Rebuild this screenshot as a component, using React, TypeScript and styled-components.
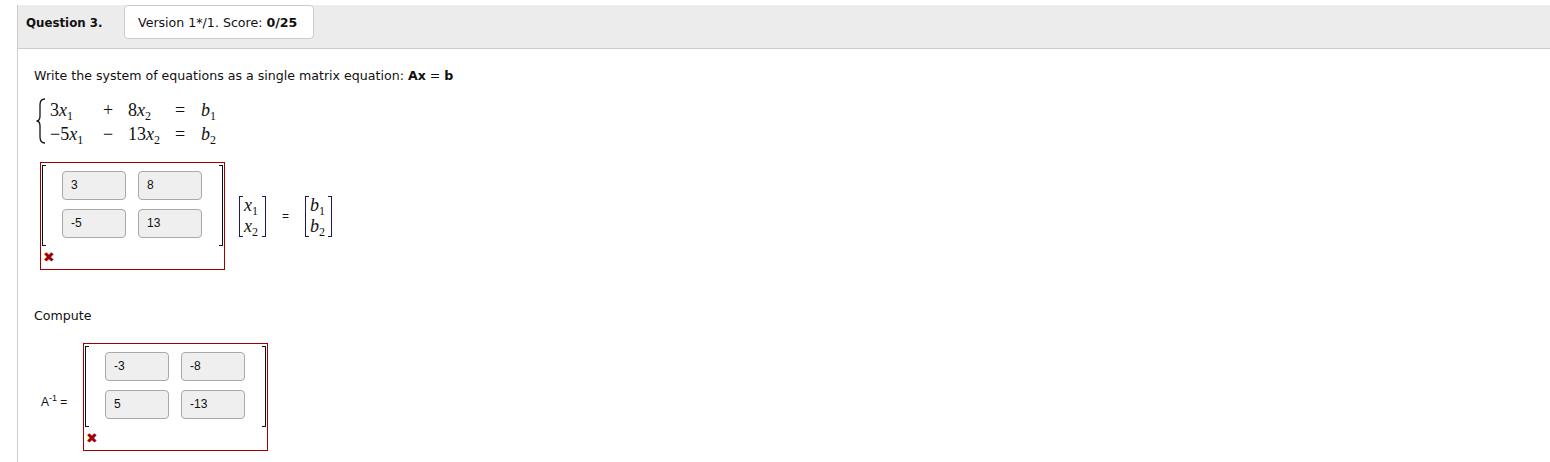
import React from 'react'
import styled, { createGlobalStyle } from 'styled-components'

const GlobalStyle = createGlobalStyle`
  body {
    margin: 0;
    background: #fff;
    font-family: "DejaVu Sans", sans-serif;
    font-size: 12.6px;
    color: #111;
  }
`

const Panel = styled.div`
  margin: 5px 0 0 17px;
  border-left: 1px solid #ccc;
  min-height: 457px;
`
const Header = styled.div`
  display: flex;
  align-items: flex-start;
  height: 43px;
  background: #ececec;
  border-bottom: 1px solid #ccc;
  padding-left: 8px;
`
const QuestionLabel = styled.div`
  font-weight: bold;
  font-size: 11.8px;
  margin-top: 11px;
  width: 98px;
`
const VersionBox = styled.div`
  height: 32px;
  line-height: 33px;
  padding: 0 16px 0 13px;
  background: #fff;
  border: 1px solid #ccc;
  border-radius: 4px;
`
const Body = styled.div`
  padding: 19px 16px 0 16px;
`
const Prompt = styled.div`
  line-height: 16px;
  margin-bottom: 12px;
`
const SystemRow = styled.div`
  display: flex;
  align-items: center;
  margin-left: 1px;
`
const EqGrid = styled.div`
  display: grid;
  grid-template-columns: 53px 25px 47px 26px 30px;
  font-family: "Liberation Serif", serif;
  font-size: 18px;
  line-height: 24px;
  margin-top: 2px;
`
const Cell = styled.span`
  white-space: nowrap;
`
const V = styled.i`
  font-style: italic;
`
const Sub = styled.sub`
  font-size: 12px;
  vertical-align: -4px;
  line-height: 0;
`
const Answer = styled.div`
  display: flex;
  align-items: center;
  margin: 16px 0 0 6px;
`
const ErrorBox = styled.div`
  flex: none;
  border: 1px solid #a10000;
  padding: 2px 1px 5px 1px;
  width: 181px;
`
const MatrixRow = styled.div`
  display: flex;
  align-items: stretch;
  height: 81px;
`
const Bracket = styled.div<{ $side: 'left' | 'right'; $color?: string }>`
  width: 3px;
  flex: none;
  border: 1px solid ${(p) => p.$color || '#111'};
  ${(p) => (p.$side === 'left' ? 'border-right: none;' : 'border-left: none;')}
`
const InputGrid = styled.div`
  flex: 1;
  display: grid;
  grid-template-columns: 64px 64px;
  column-gap: 12px;
  row-gap: 9px;
  padding: 6px 0 0 16px;
  align-content: start;
`
const NumInput = styled.div`
  height: 29px;
  box-sizing: border-box;
  background: #efefef;
  border: 1px solid #a9a9a9;
  border-radius: 4px;
  padding: 0 8px;
  line-height: 27px;
  font-family: "Liberation Sans", Arial, sans-serif;
  font-size: 12px;
  color: #111;
`
const Cross = styled.div`
  color: #a10000;
  font-family: "DejaVu Sans", sans-serif;
  font-size: 14px;
  line-height: 13px;
  height: 13px;
  margin: 5px 0 0 1px;
`
const Vector = styled.div<{ $gap: number }>`
  display: flex;
  align-items: stretch;
  height: 41px;
  width: 27px;
  margin-left: ${(p) => p.$gap}px;
`
const VectorBody = styled.div`
  flex: 1;
  display: flex;
  flex-direction: column;
  justify-content: space-around;
  padding: 0 1px;
  font-family: "Liberation Serif", serif;
  font-size: 18px;
  line-height: 19px;
`
const Equals = styled.span`
  width: 39px;
  text-align: center;
  font-family: "Liberation Sans", Arial, sans-serif;
  font-size: 12px;
`
const Compute = styled.div`
  margin-top: 38px;
  margin-bottom: 20px;
`
const InverseRow = styled.div`
  display: flex;
  align-items: center;
  margin-left: 7px;
`
const InverseLabel = styled.div`
  font-family: "Liberation Sans", Arial, sans-serif;
  font-size: 12px;
  width: 42px;
  margin-top: 8px;
  sup {
    font-size: 9px;
  }
`

const Brace = () => (
  <svg width="12" height="46" viewBox="0 0 12 46" style={{ marginRight: 3 }}>
    <path
      d="M10 1 C6 1 5 3 5 7 L5 18 C5 21 4 23 1.5 23 C4 23 5 25 5 28 L5 39 C5 43 6 45 10 45"
      fill="none"
      stroke="#111"
      strokeWidth="1.3"
    />
  </svg>
)

const Matrix = ({ values }: { values: string[] }) => (
  <ErrorBox>
    <MatrixRow>
      <Bracket $side="left" />
      <InputGrid>
        {values.map((v, i) => (
          <NumInput key={i}>{v}</NumInput>
        ))}
      </InputGrid>
      <Bracket $side="right" />
    </MatrixRow>
    <Cross>✖</Cross>
  </ErrorBox>
)

const VarVector = ({ name, gap }: { name: string; gap: number }) => (
  <Vector $gap={gap}>
    <Bracket $side="left" $color="#1a1a5a" />
    <VectorBody>
      <span>
        <V>{name}</V>
        <Sub>1</Sub>
      </span>
      <span>
        <V>{name}</V>
        <Sub>2</Sub>
      </span>
    </VectorBody>
    <Bracket $side="right" $color="#1a1a5a" />
  </Vector>
)

export default function App() {
  return (
    <>
      <GlobalStyle />
      <Panel>
        <Header>
          <QuestionLabel>Question 3.</QuestionLabel>
          <VersionBox>
            Version 1*/1. Score: <b>0/25</b>
          </VersionBox>
        </Header>
        <Body>
          <Prompt>
            Write the system of equations as a single matrix equation: <b>Ax</b> = <b>b</b>
          </Prompt>
          <SystemRow>
            <Brace />
            <EqGrid>
              <Cell>
                3<V>x</V>
                <Sub>1</Sub>
              </Cell>
              <Cell>+</Cell>
              <Cell>
                8<V>x</V>
                <Sub>2</Sub>
              </Cell>
              <Cell>=</Cell>
              <Cell>
                <V>b</V>
                <Sub>1</Sub>
              </Cell>
              <Cell>
                −5<V>x</V>
                <Sub>1</Sub>
              </Cell>
              <Cell>−</Cell>
              <Cell>
                13<V>x</V>
                <Sub>2</Sub>
              </Cell>
              <Cell>=</Cell>
              <Cell>
                <V>b</V>
                <Sub>2</Sub>
              </Cell>
            </EqGrid>
          </SystemRow>
          <Answer>
            <Matrix values={['3', '8', '-5', '13']} />
            <VarVector name="x" gap={14} />
            <Equals>=</Equals>
            <VarVector name="b" gap={0} />
          </Answer>
          <Compute>Compute</Compute>
          <InverseRow>
            <InverseLabel>
              A<sup>-1</sup> =
            </InverseLabel>
            <Matrix values={['-3', '-8', '5', '-13']} />
          </InverseRow>
        </Body>
      </Panel>
    </>
  )
}
